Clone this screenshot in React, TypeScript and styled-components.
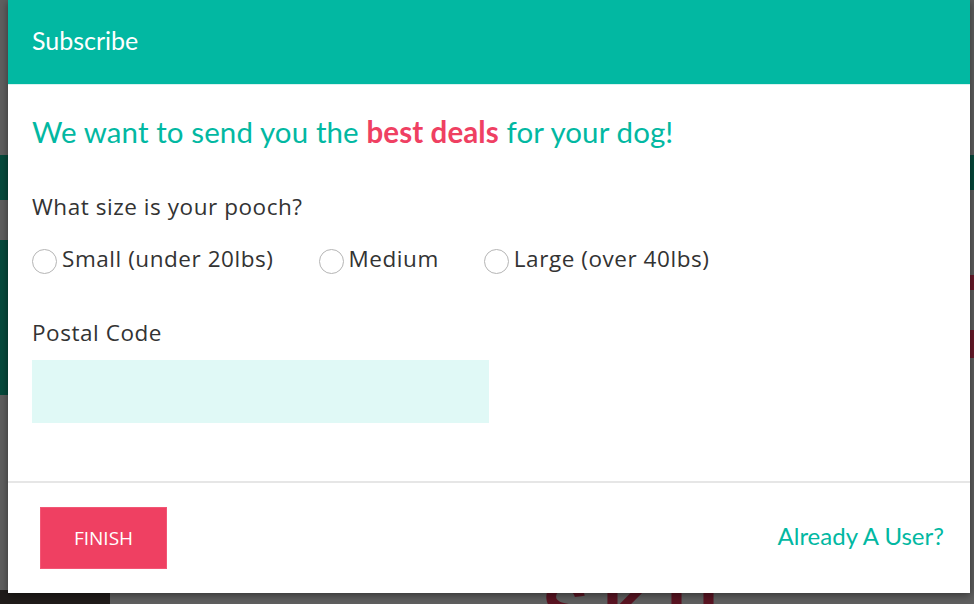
import React from "react";
import styled, { createGlobalStyle } from "styled-components";

const Global = createGlobalStyle`
  html, body { margin: 0; padding: 0; }
  body { width: 974px; height: 604px; overflow: hidden; background: #5e5e5e; }
  * { box-sizing: border-box; }
`;

const Backdrop = styled.div`
  position: relative;
  width: 974px;
  height: 604px;
  background: #5f5f5f;
  overflow: hidden;
  padding: 0 4px 11px 8px;
`;

const Deco = styled.div<{ $bg: string }>`
  position: absolute;
  background: ${(p) => p.$bg};
`;

const BottomWord = styled.div`
  position: absolute;
  left: 542px;
  top: 574px;
  font-family: "Liberation Sans", sans-serif;
  font-weight: 700;
  font-size: 70px;
  letter-spacing: 14px;
  color: #5a1422;
  line-height: 1;
`;

const Modal = styled.div`
  position: relative;
  z-index: 1;
  width: 962px;
  height: 593px;
  background: #ffffff;
  display: flex;
  flex-direction: column;
  box-shadow: 0 2px 8px rgba(0, 0, 0, 0.45);
`;

const Header = styled.div`
  height: 85px;
  background: #02b8a2;
  display: flex;
  align-items: center;
  padding: 0 24px;
  flex-shrink: 0;
  border-bottom: 1px solid #d8f3ef;
`;

const Title = styled.h1`
  margin: 0;
  font-family: Lato, "Open Sans", sans-serif;
  font-weight: 400;
  font-size: 25px;
  color: #ffffff;
  padding-bottom: 4px;
`;

const Body = styled.div`
  flex: 1;
  padding: 27px 24px 0;
  display: flex;
  flex-direction: column;
  border-bottom: 2px solid #e6e6e6;
`;

const Headline = styled.h2`
  margin: 0;
  font-family: Lato, "Open Sans", sans-serif;
  font-weight: 400;
  font-size: 29.5px;
  line-height: 40px;
  letter-spacing: 0.1px;
  color: #02b8a2;
`;

const Accent = styled.strong`
  font-weight: 700;
  color: #ef4062;
`;

const Label = styled.div`
  font-family: "Open Sans", sans-serif;
  font-size: 22.5px;
  letter-spacing: 0.55px;
  line-height: 30px;
  color: #333333;
`;

const Question = styled(Label)`
  margin-top: 40px;
`;

const RadioRow = styled.div`
  display: flex;
  align-items: center;
  margin-top: 22px;
  gap: 45px;
`;

const RadioOption = styled.label`
  display: flex;
  align-items: center;
  gap: 5px;
  font-family: "Open Sans", sans-serif;
  font-size: 22.5px;
  letter-spacing: 0.55px;
  line-height: 30px;
  color: #333333;
`;

const Circle = styled.span`
  width: 25px;
  height: 25px;
  border-radius: 50%;
  border: 1px solid #b5b5b5;
  background: #fff;
  margin-top: 5px;
  flex-shrink: 0;
`;

const PostalLabel = styled(Label)`
  margin-top: 44px;
`;

const Input = styled.div`
  margin-top: 12px;
  width: 457px;
  height: 63px;
  background: #e0f9f6;
`;

const Footer = styled.div`
  height: 110px;
  flex-shrink: 0;
  display: flex;
  align-items: center;
  justify-content: space-between;
  padding: 0 26px 0 32px;
`;

const Button = styled.button`
  width: 127px;
  height: 62px;
  background: #ef4062;
  border: 1px solid #f25675;
  color: #ffffff;
  font-family: "Open Sans", sans-serif;
  font-size: 19px;
  padding: 0;
  cursor: pointer;
  margin-bottom: 1px;
`;

const Link = styled.a`
  font-family: Lato, "Open Sans", sans-serif;
  font-size: 24px;
  color: #02b8a2;
  text-decoration: none;
  margin-bottom: 5px;
`;

export default function App() {
  return (
    <>
      <Global />
      <Backdrop>
        <Deco $bg="#064a3c" style={{ left: 0, top: 155, width: 8, height: 45 }} />
        <Deco $bg="#064a3c" style={{ left: 0, top: 240, width: 8, height: 155 }} />
        <Deco $bg="#064a3c" style={{ left: 970, top: 155, width: 4, height: 35 }} />
        <Deco $bg="#6a1a2a" style={{ left: 970, top: 275, width: 4, height: 15 }} />
        <Deco $bg="#6a1a2a" style={{ left: 970, top: 330, width: 4, height: 28 }} />
        <Deco $bg="#201c1a" style={{ left: 0, top: 590, width: 110, height: 14 }} />
        <BottomWord>SKU</BottomWord>
        <Modal>
          <Header>
            <Title>Subscribe</Title>
          </Header>
          <Body>
            <Headline>
              We want to send you the <Accent>best deals</Accent> for your dog!
            </Headline>
            <Question>What size is your pooch?</Question>
            <RadioRow>
              <RadioOption>
                <Circle />
                Small (under 20lbs)
              </RadioOption>
              <RadioOption>
                <Circle />
                Medium
              </RadioOption>
              <RadioOption>
                <Circle />
                Large (over 40lbs)
              </RadioOption>
            </RadioRow>
            <PostalLabel>Postal Code</PostalLabel>
            <Input />
          </Body>
          <Footer>
            <Button>FINISH</Button>
            <Link href="#">Already A User?</Link>
          </Footer>
        </Modal>
      </Backdrop>
    </>
  );
}
